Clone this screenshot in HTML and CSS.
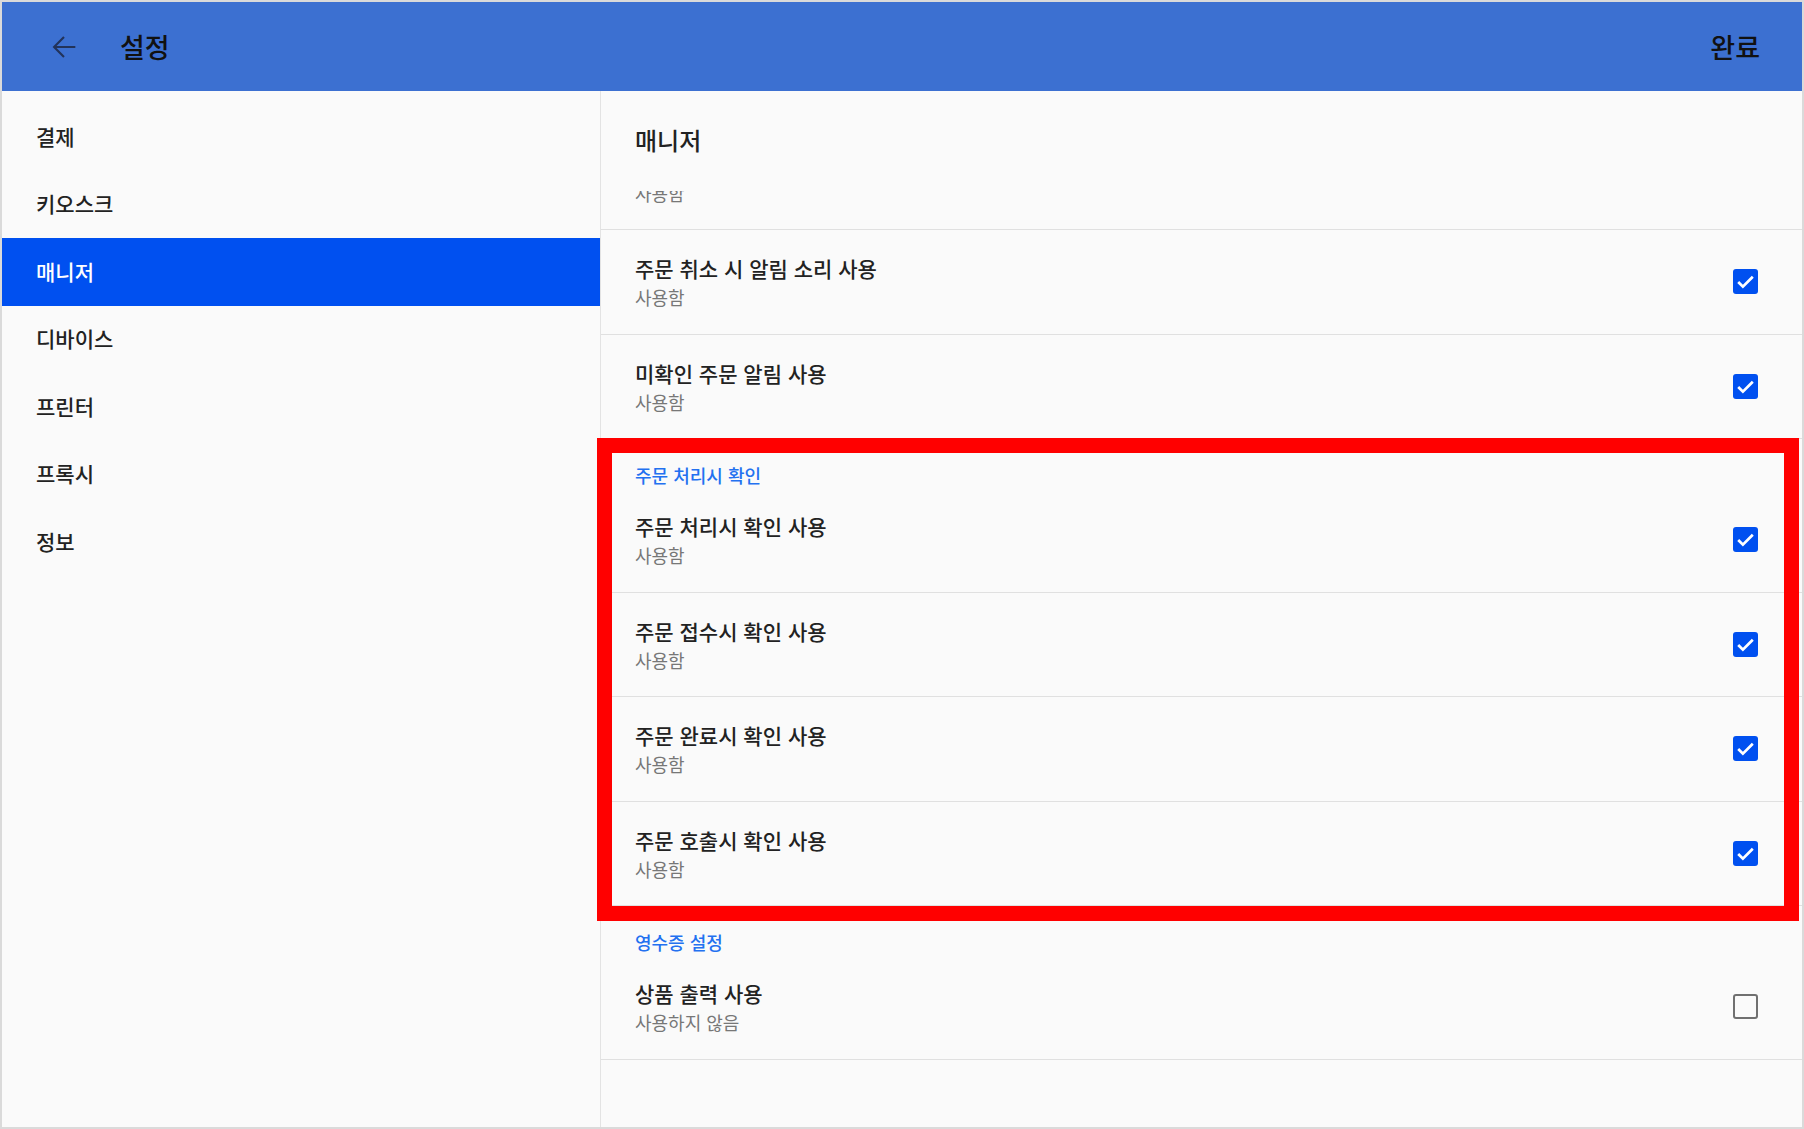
FILE: index.html
```html
<!DOCTYPE html>
<html lang="ko">
<head>
  <meta charset="UTF-8">
  <title>설정</title>
  <link rel="stylesheet" href="styles.css">
</head>
<body>

  <div class="frame">
    <header class="appbar">
      <svg class="back" viewBox="0 0 24 24"><path d="M20 12H5M12 5l-7 7 7 7"/></svg>
      <h1 class="appbar-title">설정</h1>
      <span class="appbar-action">완료</span>
    </header>

    <div class="main">
      <nav class="sidebar">
        <div class="nav-item">결제</div>
        <div class="nav-item">키오스크</div>
        <div class="nav-item active">매니저</div>
        <div class="nav-item">디바이스</div>
        <div class="nav-item">프린터</div>
        <div class="nav-item">프록시</div>
        <div class="nav-item">정보</div>
      </nav>

      <section class="content">
        <h2 class="content-title">매니저</h2>

        <div class="list">
          <div class="list-inner">
            <div class="row">
              <div class="row-text">
                <div class="row-title">주문 접수 시 알림 소리 사용</div>
                <div class="row-sub">사용함</div>
              </div>
              <span class="check on"><svg viewBox="0 0 24 24"><path d="M5 12.5l4.5 4.5 9.5-9.5"/></svg></span>
            </div>
            <div class="row">
              <div class="row-text">
                <div class="row-title">주문 취소 시 알림 소리 사용</div>
                <div class="row-sub">사용함</div>
              </div>
              <span class="check on"><svg viewBox="0 0 24 24"><path d="M5 12.5l4.5 4.5 9.5-9.5"/></svg></span>
            </div>
            <div class="row">
              <div class="row-text">
                <div class="row-title">미확인 주문 알림 사용</div>
                <div class="row-sub">사용함</div>
              </div>
              <span class="check on"><svg viewBox="0 0 24 24"><path d="M5 12.5l4.5 4.5 9.5-9.5"/></svg></span>
            </div>

            <div class="category">주문 처리시 확인</div>
            <div class="row">
              <div class="row-text">
                <div class="row-title">주문 처리시 확인 사용</div>
                <div class="row-sub">사용함</div>
              </div>
              <span class="check on"><svg viewBox="0 0 24 24"><path d="M5 12.5l4.5 4.5 9.5-9.5"/></svg></span>
            </div>
            <div class="row">
              <div class="row-text">
                <div class="row-title">주문 접수시 확인 사용</div>
                <div class="row-sub">사용함</div>
              </div>
              <span class="check on"><svg viewBox="0 0 24 24"><path d="M5 12.5l4.5 4.5 9.5-9.5"/></svg></span>
            </div>
            <div class="row">
              <div class="row-text">
                <div class="row-title">주문 완료시 확인 사용</div>
                <div class="row-sub">사용함</div>
              </div>
              <span class="check on"><svg viewBox="0 0 24 24"><path d="M5 12.5l4.5 4.5 9.5-9.5"/></svg></span>
            </div>
            <div class="row">
              <div class="row-text">
                <div class="row-title">주문 호출시 확인 사용</div>
                <div class="row-sub">사용함</div>
              </div>
              <span class="check on"><svg viewBox="0 0 24 24"><path d="M5 12.5l4.5 4.5 9.5-9.5"/></svg></span>
            </div>

            <div class="category">영수증 설정</div>
            <div class="row">
              <div class="row-text">
                <div class="row-title">상품 출력 사용</div>
                <div class="row-sub">사용하지 않음</div>
              </div>
              <span class="check off"></span>
            </div>
          </div>
        </div>
      </section>

      <!-- 강조 표시 -->
      <div class="highlight"></div>
    </div>
  </div>

</body>
</html>
```

FILE: styles.css
```css
* {
  box-sizing: border-box;
}

body {
  margin: 0;
  padding: 0;
  background-color: #fafafa;
  font-family: "Noto Sans CJK KR", "Noto Sans", sans-serif;
}

.frame {
  width: 1804px;
  height: 1129px;
  border: 2px solid #dadada;
  background-color: #fafafa;
  display: flex;
  flex-direction: column;
  overflow: hidden;
}

.appbar {
  height: 89px;
  flex: none;
  background-color: #3c70d1;
  display: flex;
  align-items: center;
  padding: 0 42px 0 45px;
}

.back {
  width: 34px;
  height: 34px;
  fill: none;
  stroke: #22335a;
  stroke-width: 1.5;
}

.appbar-title {
  flex: 1;
  margin: 0 0 0 39px;
  font-size: 27px;
  font-weight: 500;
  line-height: 1;
  color: #111;
}

.appbar-action {
  font-size: 27px;
  font-weight: 500;
  color: #111;
}

.main {
  flex: 1;
  min-height: 0;
  display: flex;
  position: relative;
}

.sidebar {
  width: 599px;
  flex: none;
  padding-top: 12px;
  border-right: 1px solid #e3e3e3;
}

.nav-item {
  height: 67.5px;
  display: flex;
  align-items: center;
  padding: 0 0 2px 34px;
  font-size: 21px;
  font-weight: 500;
  color: #222;
}

.nav-item.active {
  background-color: #0050f0;
  color: #fff;
}

.content {
  flex: 1;
  min-width: 0;
  display: flex;
  flex-direction: column;
}

.content-title {
  height: 100px;
  flex: none;
  margin: 0;
  padding: 32px 0 0 34px;
  font-size: 24px;
  font-weight: 500;
  line-height: 34px;
  color: #222;
}

.list {
  flex: 1;
  overflow: hidden;
}

.list-inner {
  margin-top: -65.5px;
}

.row {
  height: 104.5px;
  display: flex;
  align-items: center;
  padding: 0 44px 0 34px;
  border-bottom: 1px solid #e0e0e0;
}

.row-text {
  flex: 1;
  padding-top: 3px;
}

.row-title {
  font-size: 21px;
  font-weight: 500;
  line-height: 28px;
  color: #222;
}

.row-sub {
  font-size: 18px;
  line-height: 30px;
  color: #777;
}

.category {
  height: 49px;
  padding: 24px 0 0 34px;
  font-size: 18px;
  font-weight: 500;
  line-height: 24px;
  color: #2371f0;
}

.check {
  width: 25px;
  height: 25px;
  flex: none;
  border-radius: 3px;
}

.check.on {
  background-color: #0050f0;
}

.check.on svg {
  display: block;
  width: 25px;
  height: 25px;
  fill: none;
  stroke: #fff;
  stroke-width: 2.6;
}

.check.off {
  border: 2.5px solid #707070;
}

.highlight {
  position: absolute;
  left: 595px;
  top: 347px;
  width: 1202px;
  height: 483px;
  border: 15px solid #ff0000;
}
```
